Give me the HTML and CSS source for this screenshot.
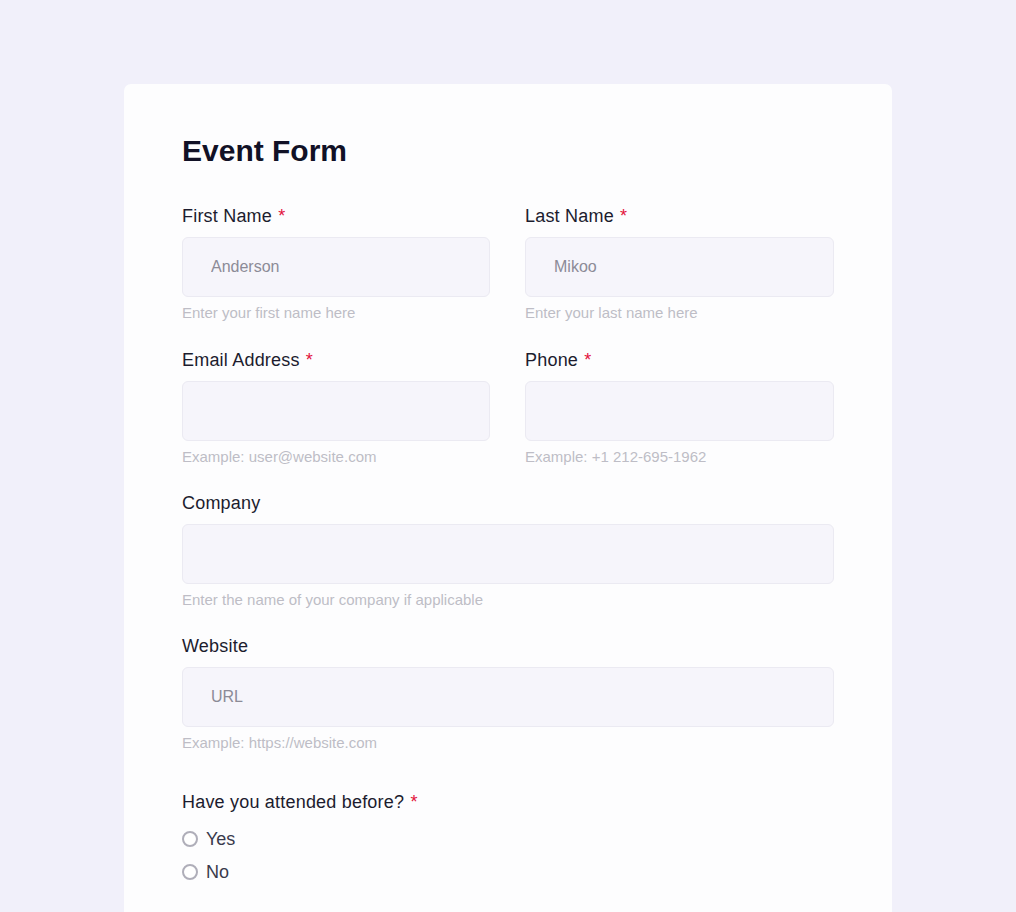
FILE: index.html
```html
<!DOCTYPE html>
<html lang="en">
<head>
<meta charset="utf-8">
<title>Event Form</title>
<link rel="stylesheet" href="styles.css">
</head>
<body>
<main class="card">
  <h1 class="title">Event Form</h1>
  <form class="form">
    <div class="row two first">
      <div class="field">
        <label class="label">First Name <span class="req">*</span></label>
        <input class="input" type="text" placeholder="Anderson">
        <div class="help">Enter your first name here</div>
      </div>
      <div class="field">
        <label class="label">Last Name <span class="req">*</span></label>
        <input class="input" type="text" placeholder="Mikoo">
        <div class="help">Enter your last name here</div>
      </div>
    </div>
    <div class="row two">
      <div class="field">
        <label class="label">Email Address <span class="req">*</span></label>
        <input class="input" type="text">
        <div class="help">Example: user@website.com</div>
      </div>
      <div class="field">
        <label class="label">Phone <span class="req">*</span></label>
        <input class="input" type="text">
        <div class="help">Example: +1 212-695-1962</div>
      </div>
    </div>
    <div class="row">
      <div class="field">
        <label class="label">Company</label>
        <input class="input" type="text">
        <div class="help">Enter the name of your company if applicable</div>
      </div>
    </div>
    <div class="row">
      <div class="field">
        <label class="label">Website</label>
        <input class="input" type="text" placeholder="URL">
        <div class="help">Example: https://website.com</div>
      </div>
    </div>
    <div class="group">
      <div class="label">Have you attended before? <span class="req">*</span></div>
      <div class="options">
        <label class="option"><input class="radio" type="radio" name="att"> Yes</label>
        <label class="option"><input class="radio" type="radio" name="att"> No</label>
      </div>
    </div>
  </form>
</main>
</body>
</html>
```

FILE: styles.css
```css
html, body {
  margin: 0;
  padding: 0;
}
body {
  background: #f1f0fa;
  font-family: "Liberation Sans", Arial, sans-serif;
  height: 912px;
  overflow: hidden;
}
.card {
  margin: 84px 0 0 124px;
  width: 768px;
  box-sizing: border-box;
  background: #fdfdfe;
  border-radius: 7px 7px 0 0;
  padding: 49px 58px 0 58px;
  height: 828px;
}
.title {
  margin: 0 0 36px 0;
  font-size: 30px;
  line-height: 36px;
  font-weight: 700;
  color: #111126;
}
.form {
  display: flex;
  flex-direction: column;
  gap: 26px;
}
.row {
  display: grid;
  grid-template-columns: 1fr;
}
.row.first {
  margin-bottom: 1px;
}
.row.two {
  grid-template-columns: 308px 309px;
  column-gap: 35px;
}
.field {
  display: flex;
  flex-direction: column;
}
.label {
  font-size: 18px;
  line-height: 22px;
  color: #1c1c2e;
  margin-bottom: 10px;
  letter-spacing: 0.2px;
}
.req {
  color: #e3123c;
  margin-left: 1px;
}
.input {
  height: 60px;
  box-sizing: border-box;
  border: 1px solid #ebeaf2;
  border-radius: 6px;
  background: #f6f5fb;
  padding: 0 28px;
  font-family: "Liberation Sans", Arial, sans-serif;
  font-size: 16px;
  color: #2a2a3a;
  outline: none;
  width: 100%;
}
.input::placeholder {
  color: #8c8b97;
}
.help {
  margin-top: 7px;
  font-size: 15px;
  line-height: 18px;
  color: #bebdc6;
}
.group {
  margin-top: 13px;
}
.group .label {
  margin-bottom: 15px;
}
.options {
  display: flex;
  flex-direction: column;
  gap: 11px;
}
.option {
  display: flex;
  align-items: center;
  gap: 8px;
  font-size: 18px;
  line-height: 22px;
  color: #3a3a4c;
}
.radio {
  appearance: none;
  -webkit-appearance: none;
  margin: 0;
  width: 16px;
  height: 16px;
  border: 2px solid #afaeb9;
  border-radius: 50%;
  background: #ffffff;
  box-sizing: border-box;
}
```
